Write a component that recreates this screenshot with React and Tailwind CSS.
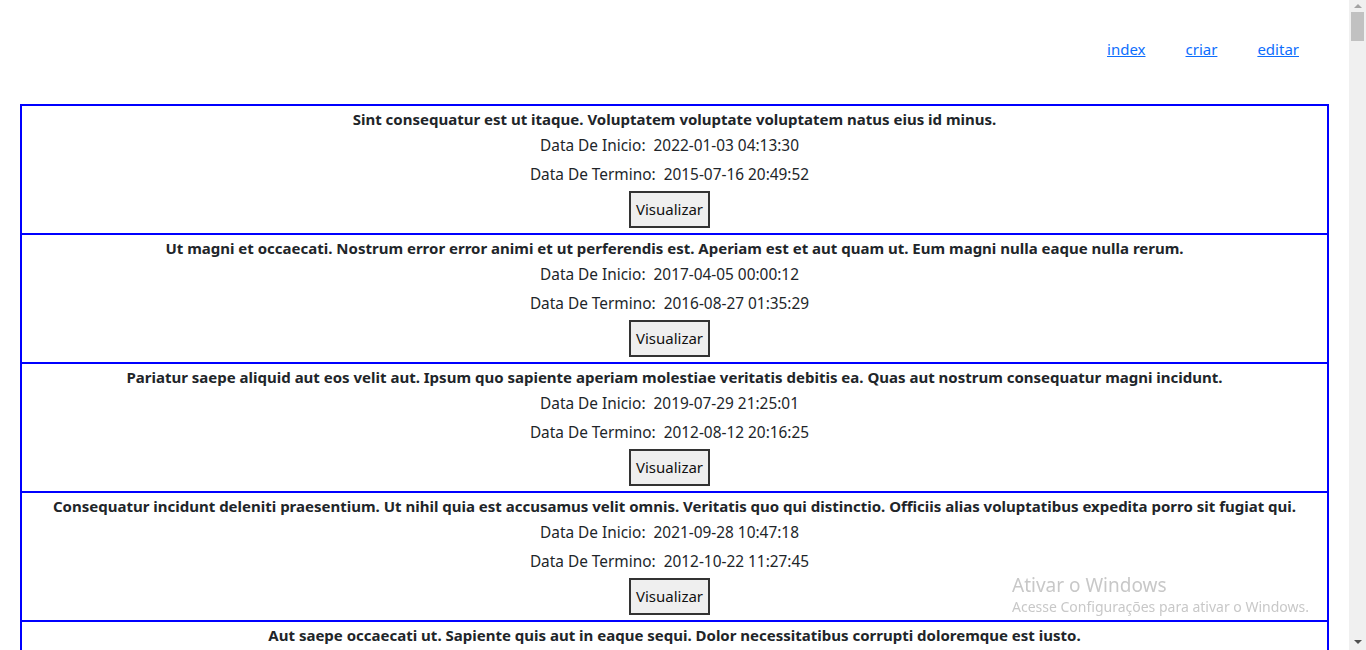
import React from "react";

const eventos = [
  {
    titulo: "Sint consequatur est ut itaque. Voluptatem voluptate voluptatem natus eius id minus.",
    inicio: "2022-01-03 04:13:30",
    termino: "2015-07-16 20:49:52",
  },
  {
    titulo: "Ut magni et occaecati. Nostrum error error animi et ut perferendis est. Aperiam est et aut quam ut. Eum magni nulla eaque nulla rerum.",
    inicio: "2017-04-05 00:00:12",
    termino: "2016-08-27 01:35:29",
  },
  {
    titulo: "Pariatur saepe aliquid aut eos velit aut. Ipsum quo sapiente aperiam molestiae veritatis debitis ea. Quas aut nostrum consequatur magni incidunt.",
    inicio: "2019-07-29 21:25:01",
    termino: "2012-08-12 20:16:25",
  },
  {
    titulo: "Consequatur incidunt deleniti praesentium. Ut nihil quia est accusamus velit omnis. Veritatis quo qui distinctio. Officiis alias voluptatibus expedita porro sit fugiat qui.",
    inicio: "2021-09-28 10:47:18",
    termino: "2012-10-22 11:27:45",
  },
  {
    titulo: "Aut saepe occaecati ut. Sapiente quis aut in eaque sequi. Dolor necessitatibus corrupti doloremque est iusto.",
    inicio: "2020-02-11 08:14:55",
    termino: "2013-05-19 16:02:37",
  },
];

const Card = ({ evento }) => (
  <div className="flex flex-col items-center pt-[1px] pb-[5px]">
    {/* Titulo */}
    <p className="font-bold leading-6">{evento.titulo}</p>

    {/* Datas */}
    <p className="leading-6 text-[15.4px] mt-[3px] mr-[10px] whitespace-pre">Data De Inicio:  {evento.inicio}</p>
    <p className="leading-6 text-[15.4px] mt-[5px] mr-[10px] whitespace-pre">Data De Termino:  {evento.termino}</p>

    <button className="mt-[4px] mr-[10px] h-[37px] px-[5px] bg-[#efefef] border-2 border-[#333] text-[#111]">
      Visualizar
    </button>
  </div>
);

export default function App() {
  return (
    <div className="h-screen flex overflow-hidden bg-white text-[#212529] text-[15px] font-['Noto_Sans',sans-serif]">
      <div className="flex-1 overflow-hidden">

        {/* Nav */}
        <nav className="flex justify-end gap-10 pr-[50px] pt-[37px] h-[104px]">
          <a href="#" className="underline text-[#0d6efd] leading-6 h-6">index</a>
          <a href="#" className="underline text-[#0d6efd] leading-6 h-6">criar</a>
          <a href="#" className="underline text-[#0d6efd] leading-6 h-6">editar</a>
        </nav>

        {/* Lista */}
        <div className="mx-5 border-2 border-[#0000ff] divide-y-2 divide-[#0000ff] text-center">
          {eventos.map((evento, i) => (
            <Card key={i} evento={evento} />
          ))}
        </div>
      </div>

      {/* Scrollbar */}
      <div className="w-[17px] bg-[#f0f0f0] flex flex-col items-center">
        <div className="h-[12px] flex items-center justify-center">
          <div className="w-0 h-0 border-x-[4px] border-x-transparent border-b-[4px] border-b-[#a3a3a3]" />
        </div>
        <div className="w-[13px] h-[29px] bg-[#c1c1c1]" />
        <div className="flex-1" />
        <div className="h-[17px] flex items-center justify-center">
          <div className="w-0 h-0 border-x-[4px] border-x-transparent border-t-[4px] border-t-[#505050]" />
        </div>
      </div>

      {/* Marca d'agua */}
      <div className="fixed left-[1012px] top-[571px] text-[#c8c8c8] pointer-events-none">
        <p className="text-[19px] leading-7">Ativar o Windows</p>
        <p className="text-[14px] leading-4">Acesse Configurações para ativar o Windows.</p>
      </div>
    </div>
  );
}
